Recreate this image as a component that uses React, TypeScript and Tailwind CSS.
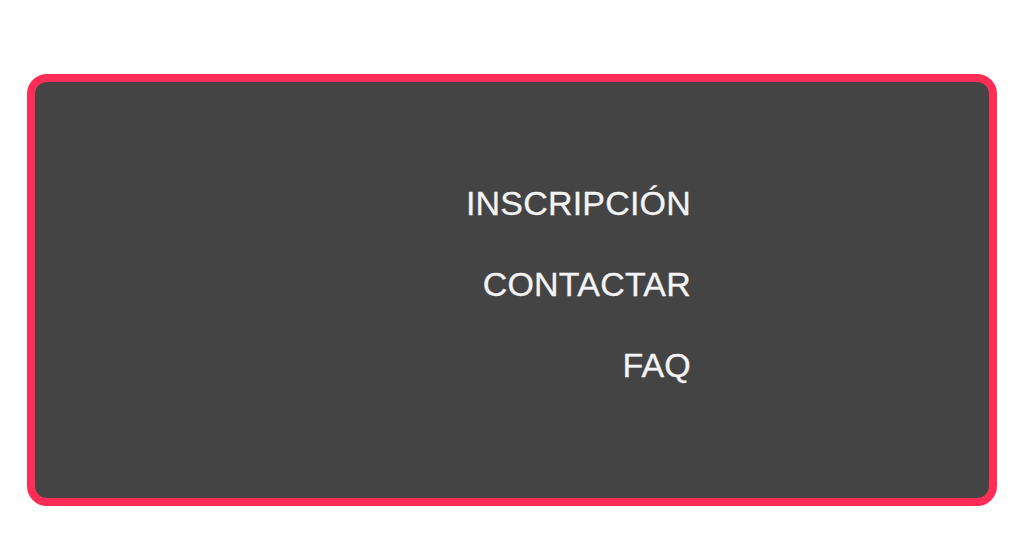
const links = ["INSCRIPCIÓN", "CONTACTAR", "FAQ"];

const App = () => {
  return (
    <div className="min-h-screen bg-white pt-[74px] px-[27px]">
      <nav className="h-[432px] rounded-[20px] border-[8px] border-[#ff2d55] bg-[#444444] pt-[81px] pr-[298px]">
        <ul className="flex flex-col items-end">
          {links.map((label) => (
            <li
              key={label}
              className="text-[34px] leading-[81px] tracking-[0.2px] text-[#f4f4f4] [-webkit-text-stroke:0.3px_#f4f4f4]"
              style={{ fontFamily: '"Liberation Sans", Arial, sans-serif' }}
            >
              {label}
            </li>
          ))}
        </ul>
      </nav>
    </div>
  );
};

export default App;
